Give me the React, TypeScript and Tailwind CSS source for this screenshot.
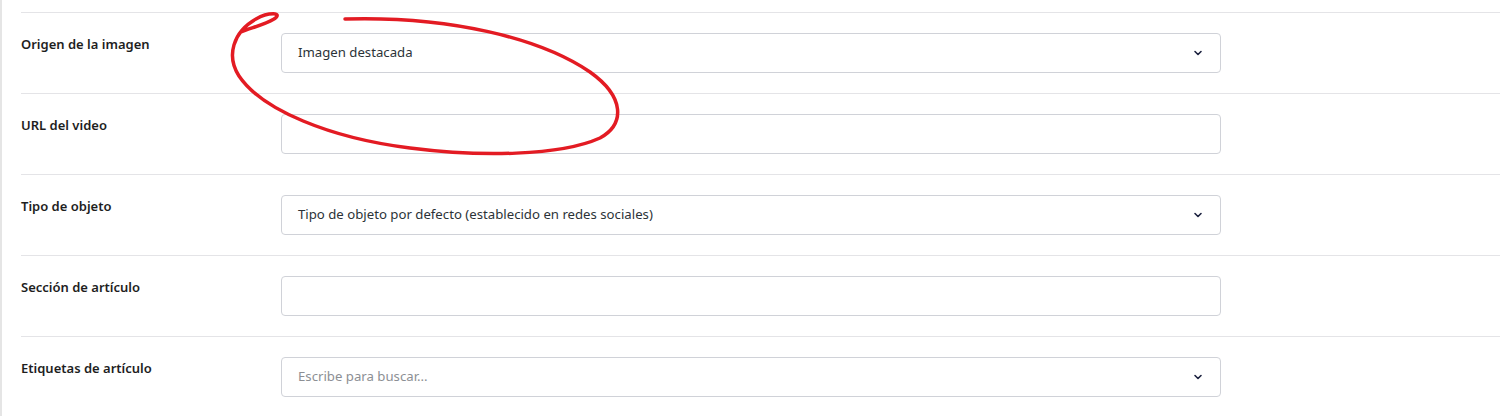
import { ChevronDown } from 'lucide-react'

type Field = { label: string; kind: 'select' | 'input'; value?: string; placeholder?: string }

const fields: Field[] = [
  { label: 'Origen de la imagen', kind: 'select', value: 'Imagen destacada' },
  { label: 'URL del video', kind: 'input' },
  { label: 'Tipo de objeto', kind: 'select', value: 'Tipo de objeto por defecto (establecido en redes sociales)' },
  { label: 'Sección de artículo', kind: 'input' },
  { label: 'Etiquetas de artículo', kind: 'select', placeholder: 'Escribe para buscar...' },
]

function Row({ f }: { f: Field }) {
  return (
    <div className="flex border-t border-[#e4e4e7] py-5">
      <div className="w-[260px] shrink-0 pt-px text-[13px] leading-5 font-semibold text-[#1e1e1e]">{f.label}</div>
      <div className="flex h-10 w-[940px] items-center justify-between rounded border border-[#d0d2d8] bg-white pl-4 pr-4">
        <span className={f.placeholder ? 'text-[13.2px] text-[#8c8f94]' : 'text-[13.2px] text-[#2c3338]'}>
          {f.value ?? f.placeholder ?? ''}
        </span>
        {f.kind === 'select' && <ChevronDown size={12} strokeWidth={3.2} className="text-[#1d2340]" />}
      </div>
    </div>
  )
}

export default function App() {
  return (
    <div className="relative h-[416px] w-[1500px] overflow-hidden bg-white font-['Noto_Sans',sans-serif]">
      <div className="h-full border-l-2 border-[#e5e5e5] pl-[19px] pt-3">
        {fields.map(f => <Row key={f.label} f={f} />)}
      </div>
      <svg className="pointer-events-none absolute left-0 top-0" width="1500" height="416" viewBox="0 0 1500 416" fill="none">
        <path
          d="M345,19 C450,16 540,38 590,72 C625,97 625,124 600,138 C560,156 480,157 410,148 C330,138 262,110 239,76 C226,56 233,32 256,19 C268,12 284,12 274,19 C264,25 250,28 241,32"
          stroke="#e31b23"
          strokeWidth="3.5"
          strokeLinecap="round"
          strokeLinejoin="round"
        />
      </svg>
    </div>
  )
}
